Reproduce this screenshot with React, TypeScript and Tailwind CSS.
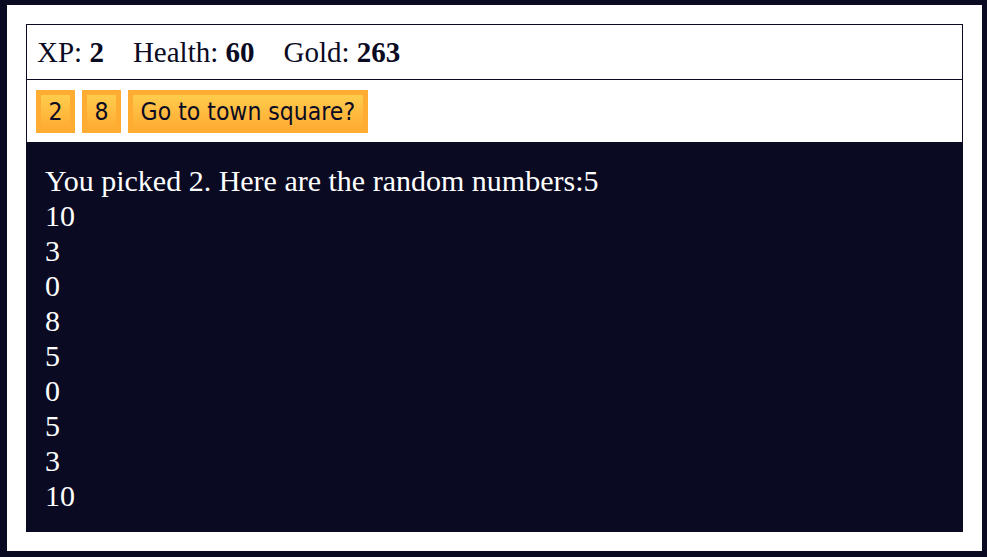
const stats = [
  { label: 'XP', value: 2 },
  { label: 'Health', value: 60 },
  { label: 'Gold', value: 263 },
]

const buttons = ['2', '8', 'Go to town square?']

const numbers = [5, 10, 3, 0, 8, 5, 0, 5, 3, 10]

export default function App() {
  return (
    <div className="h-screen bg-[#0a0a23] pt-[5px] pl-[7px] pr-[5px] pb-[6px]">
      <div className="flex h-full flex-col bg-white p-[19px]">
        <div className="flex h-[56px] items-center gap-[29px] border border-[#0a0a23] px-[10px] pt-[2px] font-['Liberation_Serif',serif] text-[29px] text-[#0a0a23]">
          {stats.map((s) => (
            <span key={s.label}>
              {s.label}: <strong>{s.value}</strong>
            </span>
          ))}
        </div>
        <div className="flex h-[63px] items-center gap-[7px] border border-t-0 border-[#0a0a23] px-[9px] pt-[1px]">
          {buttons.map((b) => (
            <button
              key={b}
              className="flex h-[43px] cursor-pointer items-center border-[5px] border-[#feac32] bg-gradient-to-b from-[#fecc4c] to-[#ffac33] px-[7.5px] pt-[1px] font-['DejaVu_Sans',sans-serif] text-[24.5px] font-stretch-condensed text-[#0a0a23]"
            >
              {b}
            </button>
          ))}
        </div>
        <div className="flex-1 bg-[#0a0a23] px-[19px] pt-[20px] font-['Liberation_Serif',serif] text-[30px] leading-[35px] text-white whitespace-pre-line">
          {'You picked 2. Here are the random numbers:' + numbers.join('\n')}
        </div>
      </div>
    </div>
  )
}
